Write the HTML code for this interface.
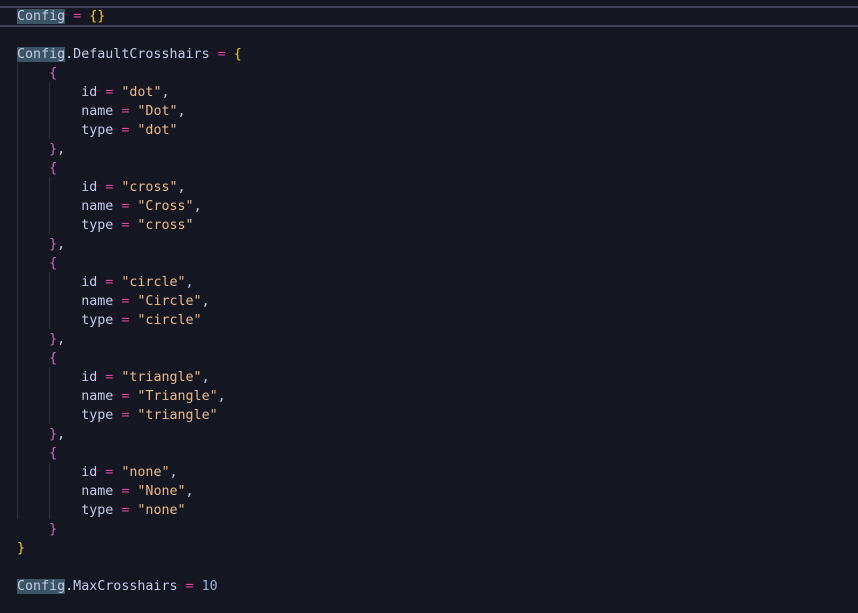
<!DOCTYPE html>
<html><head><style>
html,body{margin:0;padding:0;width:858px;height:613px;overflow:hidden;background:#141622}
.ed{position:absolute;left:0;top:0;width:858px;height:613px;font-family:"DejaVu Sans Mono","Liberation Mono",monospace;font-size:13.33px;color:#c3cbe6}
.l{position:absolute;left:17px;height:19px;line-height:19px;white-space:pre;margin-top:1px}
.cur{position:absolute;left:0;top:6px;width:858px;height:17px;border-top:2px solid #42455a;border-bottom:2px solid #42455a;box-sizing:content-box}
.h{background:#3b5565}
.o{color:#e8469a}.s{color:#e8b98a}.y{color:#f5cf1c}.p{color:#d165c4}.n{color:#9fb4d8}
.g{position:absolute;width:1px;background:#2c2f3e}
</style></head><body><div class="ed">
<div class="cur"></div>
<div class="g" style="left:17px;top:63px;height:456px"></div>
<div class="g" style="left:49px;top:82px;height:57px"></div>
<div class="g" style="left:49px;top:177px;height:57px"></div>
<div class="g" style="left:49px;top:272px;height:57px"></div>
<div class="g" style="left:49px;top:367px;height:57px"></div>
<div class="g" style="left:49px;top:462px;height:57px"></div>
<div class="l" style="top:6px"><span class="h">Config</span> <span class="o">=</span> <span class="y">{}</span></div>
<div class="l" style="top:44px"><span class="h">Config</span>.DefaultCrosshairs <span class="o">=</span> <span class="y">{</span></div>
<div class="l" style="top:63px">    <span class="p">{</span></div>
<div class="l" style="top:82px">        id <span class="o">=</span> <span class="s">"dot"</span>,</div>
<div class="l" style="top:101px">        name <span class="o">=</span> <span class="s">"Dot"</span>,</div>
<div class="l" style="top:120px">        type <span class="o">=</span> <span class="s">"dot"</span></div>
<div class="l" style="top:139px">    <span class="p">}</span>,</div>
<div class="l" style="top:158px">    <span class="p">{</span></div>
<div class="l" style="top:177px">        id <span class="o">=</span> <span class="s">"cross"</span>,</div>
<div class="l" style="top:196px">        name <span class="o">=</span> <span class="s">"Cross"</span>,</div>
<div class="l" style="top:215px">        type <span class="o">=</span> <span class="s">"cross"</span></div>
<div class="l" style="top:234px">    <span class="p">}</span>,</div>
<div class="l" style="top:253px">    <span class="p">{</span></div>
<div class="l" style="top:272px">        id <span class="o">=</span> <span class="s">"circle"</span>,</div>
<div class="l" style="top:291px">        name <span class="o">=</span> <span class="s">"Circle"</span>,</div>
<div class="l" style="top:310px">        type <span class="o">=</span> <span class="s">"circle"</span></div>
<div class="l" style="top:329px">    <span class="p">}</span>,</div>
<div class="l" style="top:348px">    <span class="p">{</span></div>
<div class="l" style="top:367px">        id <span class="o">=</span> <span class="s">"triangle"</span>,</div>
<div class="l" style="top:386px">        name <span class="o">=</span> <span class="s">"Triangle"</span>,</div>
<div class="l" style="top:405px">        type <span class="o">=</span> <span class="s">"triangle"</span></div>
<div class="l" style="top:424px">    <span class="p">}</span>,</div>
<div class="l" style="top:443px">    <span class="p">{</span></div>
<div class="l" style="top:462px">        id <span class="o">=</span> <span class="s">"none"</span>,</div>
<div class="l" style="top:481px">        name <span class="o">=</span> <span class="s">"None"</span>,</div>
<div class="l" style="top:500px">        type <span class="o">=</span> <span class="s">"none"</span></div>
<div class="l" style="top:519px">    <span class="p">}</span></div>
<div class="l" style="top:538px"><span class="y">}</span></div>
<div class="l" style="top:576px"><span class="h">Config</span>.MaxCrosshairs <span class="o">=</span> <span class="n">10</span></div>
</div></body></html>
